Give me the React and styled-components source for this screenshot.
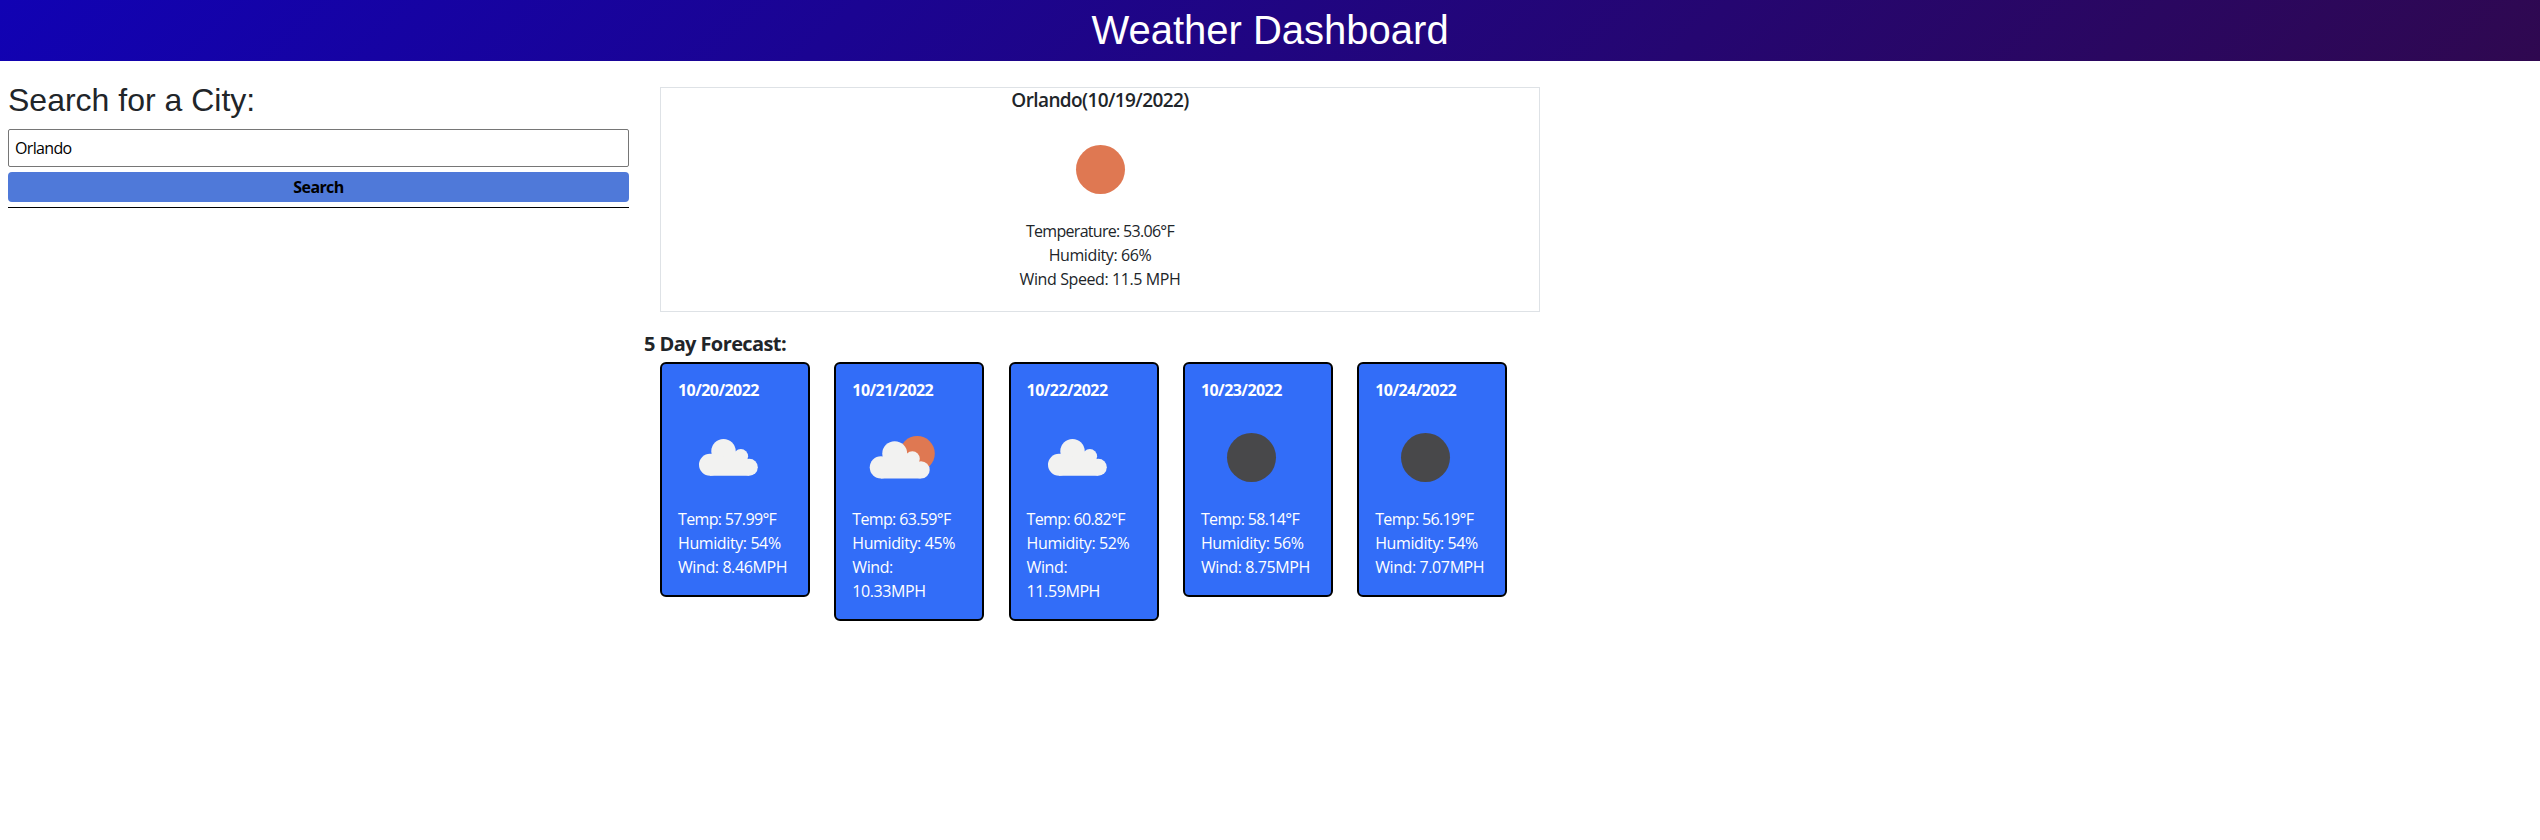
import React from "react";
import styled, { createGlobalStyle } from "styled-components";

const GlobalStyle = createGlobalStyle`
  *, *::before, *::after { box-sizing: border-box; }
  body {
    margin: 0;
    background: #fff;
    color: #212529;
    font: 400 16px/24px "Open Sans", "Noto Sans", sans-serif;
  }
`;

const Header = styled.header`
  height: 61px;
  background: linear-gradient(135deg, #1102b3, #2f0850);
  color: #fff;
  text-align: center;
`;

const Title = styled.h1`
  margin: 0;
  padding-top: 6px;
  font: 400 40px/48px "Liberation Sans", Arial, sans-serif;
`;

const Main = styled.main`
  display: flex;
  align-items: flex-start;
`;

const SearchPanel = styled.section`
  display: flex;
  flex-direction: column;
  width: 621px;
  margin: 20px 15px 0 8px;
`;

const SearchTitle = styled.h2`
  margin: 0 0 10px;
  font: 400 32px/38px "Liberation Sans", Arial, sans-serif;
`;

const CityInput = styled.input`
  height: 38px;
  padding: 0 6px;
  border: 1px solid #767676;
  border-radius: 2px;
  background: #fff;
  color: #000;
  font: 400 16px/24px "Open Sans", sans-serif;
  letter-spacing: -0.65px;
`;

const SearchButton = styled.button`
  height: 30px;
  margin-top: 5px;
  padding: 0;
  border: 0;
  border-radius: 4px;
  background: #4f79d9;
  color: #000;
  font: 700 16px/24px "Open Sans", sans-serif;
  letter-spacing: -0.6px;
`;

const Divider = styled.hr`
  width: 100%;
  height: 1px;
  margin: 5px 0 0;
  border: 0;
  background: #000;
`;

const Results = styled.section`
  width: 900px;
  padding-top: 26px;
`;

const Current = styled.article`
  display: flex;
  flex-direction: column;
  align-items: center;
  width: 880px;
  height: 225px;
  margin-left: 16px;
  border: 1px solid #dee2e6;
`;

const CurrentTitle = styled.h3`
  margin: 0;
  font-size: 19px;
  font-weight: 600;
  line-height: 25px;
  letter-spacing: -0.6px;
`;

const Icon = styled.svg`
  display: block;
  width: 100px;
  height: 100px;
  margin-top: ${(p) => p.$gap}px;
`;

const Reading = styled.p`
  margin: 0;
  letter-spacing: ${(p) => p.$tracking || "-0.4px"};
`;

const CurrentReadings = styled.div`
  text-align: center;
`;

const ForecastTitle = styled.h4`
  margin: 20px 0 6px;
  font-size: 20px;
  font-weight: 700;
  line-height: 24px;
  letter-spacing: -0.6px;
`;

const ForecastRow = styled.div`
  display: flex;
  align-items: flex-start;
  gap: 24.3px;
  margin-left: 16px;
`;

const DayCard = styled.article`
  flex: none;
  width: 150px;
  padding: 16px;
  border: 2px solid #000;
  border-radius: 6px;
  background: #326df8;
  color: #fff;
`;

const DayDate = styled.h5`
  margin: 0;
  font-size: 16px;
  font-weight: 700;
  line-height: 20px;
  letter-spacing: -0.55px;
`;

function Cloud(props) {
  return (
    <g fill="#f2f2f1" {...props}>
      <circle cx="32" cy="57.7" r="11" />
      <circle cx="45.5" cy="44.2" r="12.2" />
      <circle cx="62.8" cy="49.3" r="7.3" />
      <circle cx="71.3" cy="60.2" r="8.5" />
      <path d="M32 68.7V50H45L62 47L71 58V68.7Z" />
    </g>
  );
}

function WeatherIcon({ kind, gap }) {
  return (
    <Icon viewBox="0 0 100 100" $gap={gap} aria-hidden="true">
      {kind === "sun" && <circle cx="50.5" cy="50.5" r="24.5" fill="#df7852" />}
      {kind === "night" && <circle cx="50.5" cy="50.5" r="24.5" fill="#48484a" />}
      {kind === "cloud" && <Cloud />}
      {kind === "partly" && (
        <>
          <circle cx="65.2" cy="46.6" r="17.6" fill="#df7852" />
          <Cloud transform="translate(-3.7 1.5) scale(1.02)" />
        </>
      )}
    </Icon>
  );
}

const days = [
  { date: "10/20/2022", kind: "cloud", temp: "57.99", humidity: 54, wind: "8.46" },
  { date: "10/21/2022", kind: "partly", temp: "63.59", humidity: 45, wind: "10.33" },
  { date: "10/22/2022", kind: "cloud", temp: "60.82", humidity: 52, wind: "11.59" },
  { date: "10/23/2022", kind: "night", temp: "58.14", humidity: 56, wind: "8.75" },
  { date: "10/24/2022", kind: "night", temp: "56.19", humidity: 54, wind: "7.07" },
];

export default function App() {
  return (
    <>
      <GlobalStyle />
      <Header>
        <Title>Weather Dashboard</Title>
      </Header>
      <Main>
        <SearchPanel>
          <SearchTitle>Search for a City:</SearchTitle>
          <CityInput defaultValue="Orlando" aria-label="City" />
          <SearchButton type="button">Search</SearchButton>
          <Divider />
        </SearchPanel>
        <Results>
          <Current>
            <CurrentTitle>Orlando(10/19/2022)</CurrentTitle>
            <WeatherIcon kind="sun" gap={6} />
            <CurrentReadings>
              <Reading $tracking="-0.7px">Temperature: 53.06°F</Reading>
              <Reading>Humidity: 66%</Reading>
              <Reading>Wind Speed: 11.5 MPH</Reading>
            </CurrentReadings>
          </Current>
          <ForecastTitle>5 Day Forecast:</ForecastTitle>
          <ForecastRow>
            {days.map((d) => (
              <DayCard key={d.date}>
                <DayDate>{d.date}</DayDate>
                <WeatherIcon kind={d.kind} gap={7} />
                <Reading $tracking="-0.65px">Temp: {d.temp}°F</Reading>
                <Reading>Humidity: {d.humidity}%</Reading>
                <Reading>Wind: {d.wind}MPH</Reading>
              </DayCard>
            ))}
          </ForecastRow>
        </Results>
      </Main>
    </>
  );
}
